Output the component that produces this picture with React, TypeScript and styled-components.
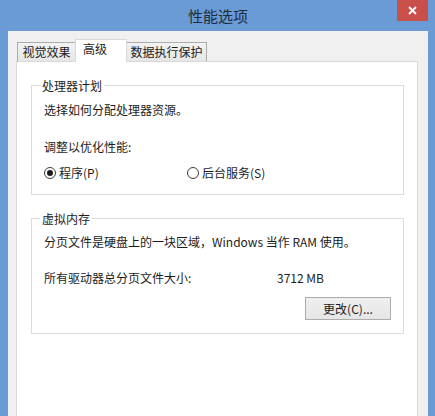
import styled, { createGlobalStyle } from 'styled-components';

const GlobalStyle = createGlobalStyle`
  html, body {
    margin: 0;
    padding: 0;
  }
  body {
    font-family: "Noto Sans CJK SC", "Liberation Sans", sans-serif;
    font-size: 12px;
    color: #1c1c1c;
  }
`;

type TabType = {
  label: string;
  width: number;
  active?: boolean;
};

const tabs: TabType[] = [
  { label: '视觉效果', width: 59 },
  { label: '高级', width: 52, active: true },
  { label: '数据执行保护', width: 81 },
];

const App = () => {
  return (
    <>
      <GlobalStyle />
      <Window>
        <TitleBar>
          <span />
          <Title>性能选项</Title>
          <CloseButton aria-label="关闭">
            <svg width="9" height="9" viewBox="0 0 9 9">
              <path d="M1 1 L8 8 M8 1 L1 8" stroke="#fff" strokeWidth="1.8" />
            </svg>
          </CloseButton>
        </TitleBar>
        <Client>
          <TabRow>
            {tabs.map((tab) => (
              <Tab key={tab.label} $width={tab.width} $active={tab.active}>
                {tab.label}
              </Tab>
            ))}
          </TabRow>
          <Panel>
            <GroupBox>
              <Legend>处理器计划</Legend>
              <Line $top={8}>选择如何分配处理器资源。</Line>
              <Line $top={21}>调整以优化性能:</Line>
              <RadioRow>
                <RadioItem $width={143}>
                  <Radio $checked />
                  程序(P)
                </RadioItem>
                <RadioItem>
                  <Radio />
                  后台服务(S)
                </RadioItem>
              </RadioRow>
            </GroupBox>
            <GroupBox $gap={23}>
              <Legend>虚拟内存</Legend>
              <Line $top={7}>分页文件是硬盘上的一块区域，Windows 当作 RAM 使用。</Line>
              <SizeRow>
                <span>所有驱动器总分页文件大小:</span>
                <span>3712 MB</span>
              </SizeRow>
              <ButtonRow>
                <Button>更改(C)...</Button>
              </ButtonRow>
            </GroupBox>
          </Panel>
        </Client>
      </Window>
    </>
  );
};

export default App;

const Window = styled.div`
  box-sizing: border-box;
  width: 100vw;
  height: 100vh;
  display: flex;
  flex-direction: column;
  padding: 0 7px 0 8px;
  background: #6a9bd5;
  overflow: hidden;
`;

const TitleBar = styled.div`
  height: 31px;
  flex-shrink: 0;
  display: grid;
  grid-template-columns: 1fr auto 1fr;
  align-items: start;
`;

const Title = styled.div`
  margin-top: 6px;
  font-size: 15px;
  line-height: 20px;
  color: #1e2b3c;
`;

const CloseButton = styled.div`
  justify-self: end;
  width: 31px;
  height: 21px;
  display: flex;
  align-items: center;
  justify-content: center;
  background: #c9504a;
`;

const Client = styled.div`
  flex: 1;
  display: flex;
  flex-direction: column;
  padding: 8px 10px 0 8px;
  background: #f0f0f0;
`;

const TabRow = styled.div`
  display: flex;
  align-items: flex-end;
  padding-left: 1px;
  margin-bottom: -1px;
  position: relative;
  z-index: 1;
`;

const Tab = styled.div<{ $width: number; $active?: boolean }>`
  box-sizing: border-box;
  width: ${(p) => p.$width}px;
  height: ${(p) => (p.$active ? 23 : 20)}px;
  padding: 1px 0 0 ${(p) => (p.$active ? 7 : 0)}px;
  margin: 0 ${(p) => (p.$active ? -1 : 0)}px;
  position: relative;
  z-index: ${(p) => (p.$active ? 2 : 1)};
  line-height: 16px;
  text-align: ${(p) => (p.$active ? 'left' : 'center')};
  white-space: nowrap;
  border: 1px solid ${(p) => (p.$active ? '#d9d9d9' : '#acacac')};
  border-bottom: ${(p) => (p.$active ? 'none' : '1px solid #d9d9d9')};
  background: ${(p) => (p.$active ? '#ffffff' : 'linear-gradient(#f2f2f2, #e6e6e6)')};
`;

const Panel = styled.div`
  flex: 1;
  display: flex;
  flex-direction: column;
  padding: 23px 13px 0 14px;
  background: #ffffff;
  border: 1px solid #d9d9d9;
  border-bottom: none;
`;

const GroupBox = styled.div<{ $gap?: number }>`
  display: flex;
  flex-direction: column;
  align-items: flex-start;
  margin-top: ${(p) => p.$gap || 0}px;
  padding: 0 12px 13px 12px;
  border: 1px solid #dcdcdc;
`;

const Legend = styled.div`
  margin: -8px 0 0 -4px;
  padding: 0 2px;
  line-height: 16px;
  background: #ffffff;
`;

const Line = styled.div<{ $top: number }>`
  margin-top: ${(p) => p.$top}px;
  line-height: 16px;
  white-space: nowrap;
`;

const RadioRow = styled.div`
  display: flex;
  margin-top: 10px;
  line-height: 16px;
`;

const RadioItem = styled.label<{ $width?: number }>`
  display: flex;
  align-items: center;
  gap: 3px;
  width: ${(p) => (p.$width ? `${p.$width}px` : 'auto')};
`;

const Radio = styled.span<{ $checked?: boolean }>`
  box-sizing: border-box;
  width: 12px;
  height: 12px;
  border-radius: 50%;
  border: 1px solid #3c3c3c;
  background: #ffffff;
  display: flex;
  align-items: center;
  justify-content: center;

  &::after {
    content: '';
    width: 6px;
    height: 6px;
    border-radius: 50%;
    background: ${(p) => (p.$checked ? '#1a1a1a' : 'transparent')};
  }
`;

const SizeRow = styled.div`
  display: grid;
  grid-template-columns: 233px auto;
  margin-top: 20px;
  line-height: 16px;
`;

const ButtonRow = styled.div`
  align-self: stretch;
  display: flex;
  justify-content: flex-end;
  margin-top: 11px;
`;

const Button = styled.div`
  box-sizing: border-box;
  width: 86px;
  height: 23px;
  display: flex;
  align-items: center;
  justify-content: center;
  border: 1px solid #acacac;
  background: linear-gradient(#f0f0f0, #e5e5e5);
`;
